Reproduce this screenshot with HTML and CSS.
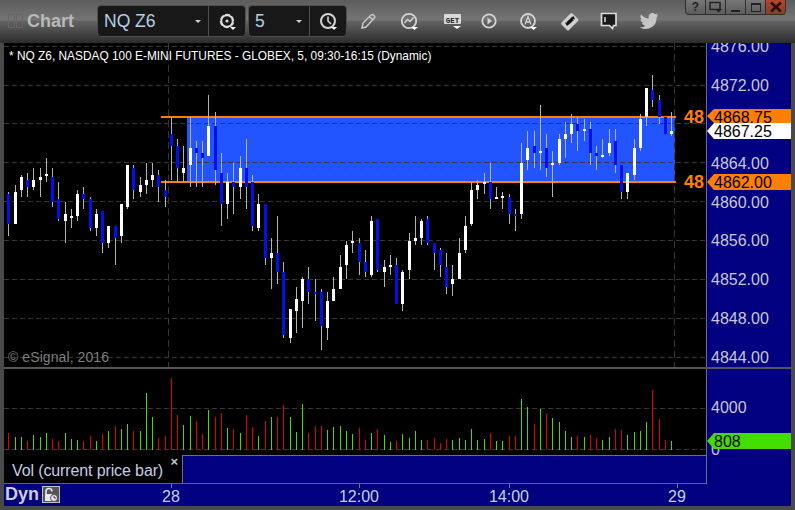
FILE: index.html
```html
<!DOCTYPE html>
<html lang="en">
<head>
<meta charset="utf-8">
<title>Chart</title>
<link rel="stylesheet" href="styles.css">
</head>
<body>
<div class="win">
  <header class="titlebar">
    <div class="brand">
      <span class="grip"></span><span class="grip"></span>
      <span class="brand-name">Chart</span>
    </div>
    <div class="combo combo-symbol">
      <div class="combo-field"><span class="combo-text">NQ Z6</span><span class="caret"></span></div>
      <div class="combo-btn">
        <svg class="ico" width="20" height="20" viewBox="0 0 20 20"><circle cx="10" cy="10" r="6" fill="none" stroke="#dcdcdc" stroke-width="2.400"/><circle cx="10" cy="10" r="7.200" fill="none" stroke="#181818" stroke-width="1.200" stroke-dasharray="1.500 6"/><circle cx="10" cy="10" r="1.500" fill="#dcdcdc"/><path d="M13 16h6l-3 3z" fill="#fff"/></svg>
      </div>
    </div>
    <div class="combo combo-interval">
      <div class="combo-field"><span class="combo-text">5</span><span class="caret"></span></div>
      <div class="combo-btn">
        <svg class="ico" width="20" height="20" viewBox="0 0 20 20"><circle cx="10" cy="10" r="7" fill="none" stroke="#d4d4d4" stroke-width="2"/><path d="M10 5.500V10l3 3" fill="none" stroke="#d4d4d4" stroke-width="1.600"/><path d="M13 16h6l-3 3z" fill="#fff"/></svg>
      </div>
    </div>
    <div class="tools">
      <svg class="ico tool-pencil" width="18" height="20" viewBox="0 0 18 20"><path d="M3 17l1-5L12 4q1.500-1 3 0.500t0 3L7 16z M10.500 5.500l3.500 3.500" fill="none" stroke="#c8c8c8" stroke-width="1.500"/></svg>
      <svg class="ico tool-trend" width="20" height="20" viewBox="0 0 20 20"><circle cx="10" cy="10" r="7.200" fill="none" stroke="#d4d4d4" stroke-width="1.800"/><path d="M5.500 12l3-3.500 2.500 2 3.500-4" fill="none" stroke="#d4d4d4" stroke-width="1.500"/><path d="M12 16h7l-3.500 3z" fill="#fff"/></svg>
      <svg class="ico tool-get" width="20" height="20" viewBox="0 0 20 20"><rect x="0" y="3" width="17" height="10" rx="1" fill="#d8d8d8"/><text class="get-text" x="8.500" y="11.500" text-anchor="middle">GET</text><path d="M9 15h8l-4 3z" fill="#fff"/></svg>
      <svg class="ico tool-play" width="20" height="20" viewBox="0 0 20 20"><circle cx="10" cy="10" r="6.700" fill="none" stroke="#d4d4d4" stroke-width="1.800"/><path d="M8.500 6.500l4.500 3.500-4.500 3.500z" fill="#d4d4d4"/></svg>
      <svg class="ico tool-alert" width="20" height="20" viewBox="0 0 20 20"><circle cx="10" cy="10" r="7" fill="none" stroke="#d4d4d4" stroke-width="1.800"/><path d="M7 13.500l3-8 3 8 M8 11h4" fill="none" stroke="#d4d4d4" stroke-width="1.300"/><path d="M12 16h7l-3.500 3z" fill="#fff"/></svg>
      <svg class="ico tool-swap" width="20" height="20" viewBox="0 0 20 20"><path d="M1.500 11.500l9-9q1-1 2 0l5.500 5.500q1 1 0 2l-9 9q-1 1-2 0l-5.500-5.500q-1-1 0-2z" fill="#cfcfcf"/><path d="M5 11.500l2 3.500 2.500-2.500z M10 7.500l3.500-2.500 1.500 3.500z" fill="#111"/><path d="M7.500 12.500l5-4.500" stroke="#111" stroke-width="3.400"/></svg>
      <svg class="ico tool-note" width="20" height="20" viewBox="0 0 20 20"><path d="M2.500 2.500h14.500v12h-2.500l-1 3-3-3h-8z" fill="#1a1a1a" stroke="#dcdcdc" stroke-width="1.700"/><path d="M6 6v5" stroke="#dcdcdc" stroke-width="1.500"/></svg>
      <svg class="ico tool-bird" width="20" height="20" viewBox="0 0 24 20"><path d="M23 2.500c-.8.400-1.700.600-2.600.700.900-.600 1.700-1.400 2-2.500-.900.500-1.900.900-2.900 1.100A4.600 4.600 0 0 0 11.700 6c0 .4 0 .7.100 1C8 6.800 4.600 5 2.300 2.200 1 4.300 1.700 7 3.700 8.300c-.7 0-1.400-.2-2-.6 0 2.300 1.600 4.200 3.700 4.600-.7.200-1.400.2-2 .1.600 1.800 2.300 3.100 4.300 3.200A9.300 9.300 0 0 1 1 17.500 13 13 0 0 0 21 6c.9-.7 1.500-1.500 2-3.500z" fill="#c6c6c6"/></svg>
    </div>
    <div class="win-controls">
      <span class="wc"><b class="wc-help">?</b></span>
      <span class="wc"><svg width="14" height="12" viewBox="0 0 14 12"><path d="M1 1.500h10v7H1z" fill="none" stroke="#222" stroke-width="1.500"/><path d="M6 8h7l-3.500 3.500z" fill="#222"/></svg></span>
      <span class="wc"><i class="wc-min"></i></span>
      <span class="wc"><i class="wc-max"></i></span>
      <span class="wc wc-close"><svg width="14" height="12" viewBox="0 0 14 12"><path d="M2 1.500l10 9M12 1.500l-10 9" stroke="#2a120c" stroke-width="2.600"/></svg></span>
    </div>
  </header>

  <main class="panes">
    <section class="pane-price">
      <div class="plot">
        <svg id="price-svg" class="chart-svg" width="702" height="324" viewBox="4 43 702 324"></svg>
        <div class="study-title">* NQ Z6, NASDAQ 100 E-MINI FUTURES - GLOBEX, 5, 09:30-16:15 (Dynamic)</div>
        <div class="copyright">© eSignal, 2016</div>
        <div class="level-label level-top">48</div>
        <div class="level-label level-bottom">48</div>
      </div>
      <div class="axis">
        <div class="axis-scale">
          <div class="axis-row">4876.00</div>
          <div class="axis-row">4872.00</div>
          <div class="axis-row"></div>
          <div class="axis-row">4864.00</div>
          <div class="axis-row">4860.00</div>
          <div class="axis-row">4856.00</div>
          <div class="axis-row">4852.00</div>
          <div class="axis-row">4848.00</div>
          <div class="axis-row">4844.00</div>
        </div>
        <div class="tag tag-orange tag-high">4868.75</div>
        <div class="tag tag-white tag-last">4867.25</div>
        <div class="tag tag-orange tag-low">4862.00</div>
      </div>
    </section>
    <div class="pane-sep"></div>
    <section class="pane-volume">
      <div class="vol-main">
        <svg id="vol-svg" class="chart-svg vol-svg" width="702" height="86" viewBox="4 369 702 86"></svg>
        <div class="legend">
          <div class="legend-label">Vol (current price bar)<span class="legend-close">×</span></div>
          <div class="legend-fill"></div>
        </div>
      </div>
      <div class="axis axis-vol">
        <div class="vol-tick tick-4000">4000</div>
        <div class="vol-tick tick-0">0</div>
        <div class="tag tag-green tag-vol">808</div>
      </div>
    </section>
    <footer class="time-axis">
      <div class="dyn">
        <span class="dyn-text">Dyn</span>
        <span class="dyn-lock"><svg width="16" height="16" viewBox="0 0 16 16"><path d="M3 8V4.500a3 3 0 0 1 6 0" fill="none" stroke="#e8e8e8" stroke-width="1.600"/><rect x="2" y="7" width="7" height="7" fill="#e8e8e8"/><circle cx="11" cy="11" r="3.500" fill="#e8e8e8" stroke="#555"/><path d="M11 9v2h2" fill="none" stroke="#444"/></svg></span>
      </div>
      <span class="time-mark mark-28">28</span>
      <span class="time-mark mark-12">12:00</span>
      <span class="time-mark mark-14">14:00</span>
      <span class="time-mark mark-29">29</span>
    </footer>
  </main>
</div>
<script src="chart.js"></script>
</body>
</html>
```

FILE: styles.css
```css
* { box-sizing: border-box; }
html, body { margin: 0; padding: 0; background: #4c4c4c; }
body { font-family: "Liberation Sans", Arial, sans-serif; }

.win { position: relative; width: 795px; height: 510px; overflow: hidden; background: #4a4a4a; }

/* Title bar */
.titlebar {
  position: relative;
  display: flex;
  align-items: flex-start;
  height: 43px;
  background: linear-gradient(#5c5c5c 0, #757575 20px, #646464 21px, #2c2c2c 43px);
}
.brand { display: flex; align-items: center; width: 97px; height: 42px; padding-left: 8px; }
.grip { width: 7px; height: 14px; margin-right: 1px; border: 1px solid #666; background: transparent; }
.brand-name { margin-left: 3px; font-size: 18px; font-weight: bold; color: #b9b9b9; }
.combo {
  display: flex;
  height: 32px;
  margin-top: 5px;
  border: 1px solid #4e4e4e;
  border-radius: 4px;
  background: #181818;
}
.combo-symbol { width: 149px; }
.combo-interval { width: 99px; margin-left: 2px; }
.combo-field {
  display: flex;
  flex: 1;
  align-items: center;
  justify-content: space-between;
  padding: 0 7px 0 6px;
  border-right: 1px solid #4e4e4e;
}
.combo-text { font-size: 17.500px; color: #b6cfe6; }
.caret { width: 0; height: 0; border-left: 3px solid transparent; border-right: 3px solid transparent; border-top: 3px solid #cfcfcf; }
.combo-btn { display: flex; align-items: center; justify-content: center; width: 36px; }
.ico { display: block; flex: none; }
.tools { display: flex; align-items: center; height: 42px; }
.tool-pencil { margin-left: 12px; }
.tool-trend { margin-left: 22px; }
.tool-get { margin-left: 25px; }
.tool-play { margin-left: 15px; }
.tool-alert { margin-left: 19px; }
.tool-swap { margin-left: 22px; }
.tool-note { margin-left: 19px; }
.tool-bird { margin-left: 20px; }
.get-text { font: bold 7.500px "Liberation Mono", monospace; fill: #222; }

.win-controls {
  position: absolute;
  top: 0;
  left: 685px;
  display: flex;
  width: 101px;
  height: 15px;
  border: 1px solid #303030;
  border-top: 0;
  border-radius: 0 0 4px 4px;
  overflow: hidden;
  background: linear-gradient(#777, #5c5c5c);
}
.wc { display: flex; align-items: center; justify-content: center; flex: 1; border-right: 1px solid #2e2e2e; }
.wc:last-child { border-right: 0; }
.wc-help { font-size: 12px; line-height: 12px; color: #222; }
.wc-min { width: 9px; height: 2px; margin-top: 7px; background: #222; }
.wc-max { width: 10px; height: 9px; border: 1px solid #222; border-top-width: 2px; }
.wc-close { background: linear-gradient(#b5452f, #8e3a26); }

/* Panes */
.panes { margin: 0 4px; }
.pane-price { display: flex; height: 324px; }
.plot { position: relative; flex: none; width: 702px; height: 324px; overflow: hidden; background: #000; }
.chart-svg { display: block; }
.vol-svg { background: #000; }
.axis { position: relative; flex: none; width: 85px; overflow: hidden; border-left: 1px solid #707070; background: #000080; }
.axis-scale { margin-top: -15px; padding-left: 4px; }
.axis-row { height: 38.875px; font-size: 16px; line-height: 38.875px; color: #c8c8d4; }
.study-title { position: absolute; left: 5px; top: 5px; font-size: 11.880px; line-height: 16px; color: #fff; white-space: nowrap; }
.copyright { position: absolute; left: 4px; top: 306px; font-size: 14px; letter-spacing: 0.080px; line-height: 16px; color: #7e7e7e; white-space: nowrap; }
.level-label {
  position: absolute;
  left: 680px;
  width: 22px;
  font-size: 18px;
  font-weight: bold;
  line-height: 18px;
  color: #ff7f00;
  white-space: nowrap;
}
.level-top { top: 65px; }
.level-bottom { top: 130px; }
.tag {
  position: absolute;
  left: 0;
  width: 84px;
  height: 16px;
  padding-left: 7px;
  font-size: 16px;
  line-height: 17px;
  color: #000;
  clip-path: polygon(0 50%, 7px 0, 100% 0, 100% 100%, 7px 100%);
}
.tag-orange { background: #ff7f00; }
.tag-white { background: #fff; }
.tag-green { background: #44dd00; }
.tag-high { top: 66px; height: 14px; }
.tag-last { top: 80px; }
.tag-low { top: 131px; }

.pane-sep { height: 2px; background: #565656; }
.pane-volume { display: flex; height: 115px; }
.vol-main { flex: none; width: 702px; border-bottom: 1px solid #606078; }
.legend { display: flex; height: 28px; }
.legend-label {
  position: relative;
  width: 178px;
  padding-left: 8px;
  font-size: 16px;
  letter-spacing: -0.120px;
  line-height: 31px;
  color: #c4cde4;
  background: #000;
}
.legend-close { position: absolute; right: 4px; top: -9px; font-size: 13px; font-weight: bold; color: #c8c8c8; }
.legend-fill { flex: 1; background: #000080; border-top: 1px solid #707070; border-left: 1px solid #707070; }
.vol-tick { position: absolute; left: 4px; font-size: 16px; line-height: 18px; color: #c8c8d4; }
.tick-4000 { top: 30px; }
.tick-0 { top: 72px; }
.tag-vol { top: 64px; }

/* Time axis */
.time-axis {
  position: relative;
  display: flex;
  height: 22px;
  background: #000080;
}
.dyn { display: flex; align-items: center; height: 21px; padding-left: 1px; }
.dyn-text { font-size: 18px; font-weight: bold; color: #cfcfcf; }
.dyn-lock { display: flex; width: 18px; height: 17px; margin-left: 3px; padding: 0; border: 1px solid #c0c0c0; background: #555; }
.time-mark { position: absolute; top: 3px; width: 60px; text-align: center; font-size: 16px; line-height: 20px; color: #c8d0e4; }
.time-mark::before {
  content: "";
  position: absolute;
  left: 30px;
  top: -3px;
  width: 1px;
  height: 4px;
  background: #707088;
}
.mark-28 { left: 137px; }
.mark-12 { left: 325px; }
.mark-14 { left: 475px; }
.mark-29 { left: 643px; }
```

FILE: chart.js
```js
(function () {
  var NS = "http://www.w3.org/2000/svg";
  function rect(svg, x, y, w, h, fill) {
    var r = document.createElementNS(NS, "rect");
    r.setAttribute("x", x); r.setAttribute("y", y);
    r.setAttribute("width", w); r.setAttribute("height", h);
    r.setAttribute("fill", fill);
    r.setAttribute("shape-rendering", "crispEdges");
    svg.appendChild(r);
  }
  function line(svg, x1, y1, x2, y2, dash) {
    var l = document.createElementNS(NS, "line");
    l.setAttribute("x1", x1); l.setAttribute("y1", y1);
    l.setAttribute("x2", x2); l.setAttribute("y2", y2);
    l.setAttribute("stroke", "#363636");
    l.setAttribute("stroke-dasharray", dash);
    l.setAttribute("shape-rendering", "crispEdges");
    svg.appendChild(l);
  }

  /* x, body colour (w/b), wick top, body top, body bottom, wick bottom */
  var candles = [
    [8,"b",192,194,224,236],[15,"w",185,192,224,224],[21,"w",175,177,190,197],[27,"b",173,180,187,197],
    [33,"w",168,180,187,190],[40,"w",168,177,180,197],[46,"w",158,174,176,182],[52,"b",168,177,202,207],
    [58,"b",182,199,219,221],[65,"w",202,214,221,243],[71,"w",209,216,218,228],[77,"w",190,194,216,221],
    [83,"b",187,194,199,209],[90,"b",197,199,228,231],[96,"w",209,214,228,236],[102,"b",211,211,243,253],
    [108,"w",226,226,243,248],[115,"b",226,226,238,265],[121,"w",204,204,236,243],[127,"w",165,165,207,209],
    [133,"b",165,168,190,199],[140,"w",177,185,192,197],[146,"w",163,180,185,194],[152,"w",163,175,180,187],
    [158,"b",170,175,187,202],[165,"b",180,190,197,207],[171,"b",117,134,146,180],[177,"b",139,146,168,182],
    [183,"w",146,168,173,182],[190,"w",117,148,165,187],[196,"b",141,148,153,187],[202,"b",141,153,158,187],
    [208,"w",95,126,156,156],[215,"b",112,126,170,185],[221,"b",153,173,204,226],[227,"w",173,182,204,219],
    [233,"b",163,182,187,214],[240,"w",156,168,187,199],[246,"b",139,168,187,209],[252,"b",175,182,226,231],
    [258,"w",194,204,228,231],[265,"b",204,204,258,265],[271,"w",238,253,258,289],[277,"b",216,253,272,284],
    [283,"b",262,272,335,338],[290,"w",309,309,338,343],[296,"w",287,299,311,333],[302,"w",277,279,301,328],
    [308,"b",267,279,292,304],[315,"b",279,292,294,321],[321,"b",289,292,326,350],[327,"w",292,301,328,340],
    [333,"w",277,289,301,301],[340,"w",255,267,289,289],[346,"w",241,245,265,279],[352,"w",231,241,243,253],
    [359,"b",238,243,262,275],[365,"b",250,262,272,277],[371,"w",216,221,275,277],[377,"b",219,219,270,272],
    [384,"w",260,267,272,287],[390,"w",255,265,267,275],[396,"b",258,265,304,304],[402,"w",270,272,304,311],
    [409,"w",233,241,270,279],[415,"w",216,238,241,245],[421,"w",219,221,238,245],[427,"b",216,219,243,245],
    [434,"b",243,243,253,270],[440,"b",248,250,265,277],[446,"b",253,267,287,294],[452,"w",265,279,284,296],
    [459,"w",238,253,279,279],[465,"w",216,226,250,253],[471,"w",182,190,224,226],[477,"w",180,185,190,199],
    [484,"w",173,182,184,194],[490,"b",163,182,199,209],[496,"w",187,197,199,199],[502,"w",192,196,198,209],
    [509,"b",194,197,214,224],[515,"b",209,214,216,231],[521,"w",143,163,214,219],[527,"w",131,148,160,170],
    [534,"b",131,146,153,168],[540,"w",105,151,153,170],[546,"b",134,148,168,177],[552,"w",151,163,165,197],
    [559,"w",134,139,163,165],[565,"w",122,134,139,158],[571,"w",114,124,134,143],[577,"b",117,124,131,151],
    [584,"w",119,129,131,141],[590,"b",122,129,153,165],[596,"b",146,153,156,170],[602,"w",139,155,157,158],
    [609,"w",129,143,153,156],[615,"b",129,141,165,173],[621,"b",165,165,192,199],[627,"w",173,173,192,199],
    [634,"w",139,148,175,180],[640,"w",114,119,148,151],[646,"w",88,88,117,126],[652,"b",75,90,100,107],
    [659,"b",95,100,117,124],[665,"b",117,117,134,134],[671,"w",112,131,134,136]
  ];

  /* x, red or green, top of the bar */
  var vols = [
    [8,"r",433],[15,"g",437],[21,"g",437],[27,"r",441],[33,"g",435],[40,"g",437],[46,"g",433],[52,"r",439],
    [58,"r",441],[65,"g",433],[71,"g",439],[77,"g",440],[83,"r",441],[90,"r",436],[96,"g",441],[102,"r",434],
    [108,"g",431],[115,"r",426],[121,"g",429],[127,"g",424],[133,"r",431],[140,"g",431],[146,"g",393],[152,"g",417],
    [158,"r",438],[165,"r",436],[171,"r",378],[177,"r",415],[183,"g",425],[190,"g",416],[196,"r",421],[202,"r",434],
    [208,"g",410],[215,"r",417],[221,"r",413],[227,"g",428],[233,"r",429],[240,"g",433],[246,"r",415],[252,"r",427],
    [258,"g",436],[265,"r",421],[271,"g",417],[277,"r",417],[283,"r",405],[290,"g",417],[296,"g",432],[302,"g",404],
    [308,"r",433],[315,"r",426],[321,"r",426],[327,"g",430],[333,"g",427],[340,"g",426],[346,"g",431],[352,"g",434],
    [359,"r",428],[365,"r",440],[371,"g",433],[377,"r",429],[384,"g",435],[390,"g",442],[396,"r",441],[402,"g",434],
    [409,"g",438],[415,"g",431],[421,"g",440],[427,"r",440],[434,"r",438],[440,"r",443],[446,"r",439],[452,"g",440],
    [459,"g",438],[465,"g",440],[471,"g",429],[477,"g",440],[484,"g",439],[490,"r",433],[496,"g",441],[502,"g",441],
    [509,"r",436],[515,"r",436],[521,"g",399],[527,"g",407],[534,"r",424],[540,"g",409],[546,"r",414],[552,"g",418],
    [559,"g",422],[565,"g",431],[571,"g",437],[577,"r",436],[584,"g",437],[590,"r",435],[596,"r",438],[602,"g",440],
    [609,"g",437],[615,"r",429],[621,"r",430],[627,"g",435],[634,"g",432],[640,"g",431],[646,"g",422],[652,"r",390],
    [659,"r",419],[665,"r",440],[671,"g",441]
  ];

  var price = document.getElementById("price-svg");
  rect(price, 187, 118, 488, 63, "#2255ff");
  [46, 85, 123, 162, 201, 240, 279, 318, 357].forEach(function (y) {
    line(price, 4, y + 0.5, 706, y + 0.5, "5 3");
  });
  [168, 674].forEach(function (x) { line(price, x + 0.5, 43, x + 0.5, 367, "7 4"); });
  rect(price, 161, 116, 515, 2, "#ff7f00");
  rect(price, 161, 181, 515, 2, "#ff7f00");
  candles.forEach(function (c) {
    rect(price, c[0], c[2], 1, c[5] - c[2], "#b4b4b4");
    rect(price, c[0] - 1, c[3], 3, c[4] - c[3], c[1] === "w" ? "#ffffff" : "#0010e8");
  });

  var vol = document.getElementById("vol-svg");
  [408, 449].forEach(function (y) { line(vol, 4, y + 0.5, 706, y + 0.5, "5 3"); });
  vols.forEach(function (v) {
    rect(vol, v[0], v[2], 1, 450 - v[2], v[1] === "r" ? "#e00000" : "#44dd00");
  });
})();
```
